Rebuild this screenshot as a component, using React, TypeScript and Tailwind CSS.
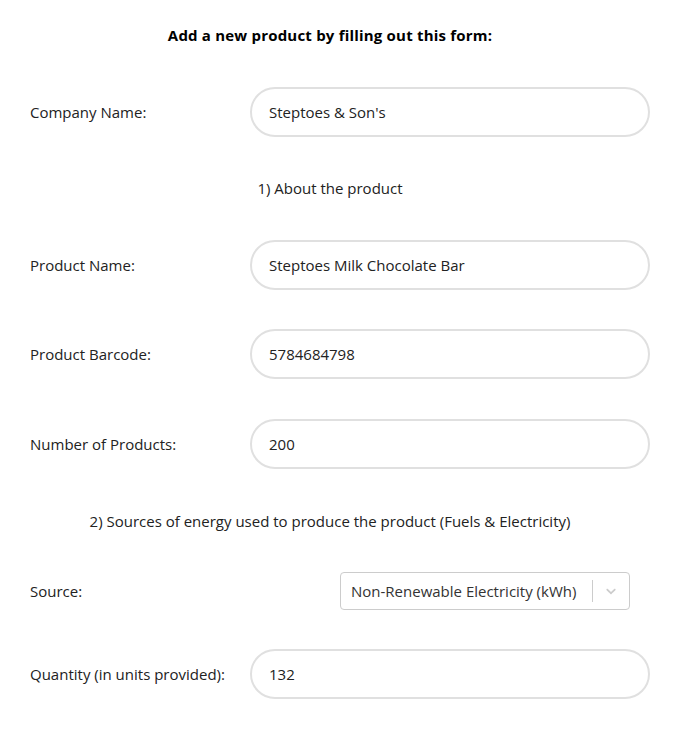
import React, { useState } from "react";

const font = { fontFamily: '"Segoe UI", "Open Sans", "Liberation Sans", sans-serif' };

const Row = ({ label, value, onChange }: { label: string; value: string; onChange: (v: string) => void }) => (
  <div className="flex items-center">
    <label className="w-[250px] shrink-0 pl-[30px] text-[15px] text-[#222] whitespace-nowrap">{label}</label>
    <input
      value={value}
      onChange={(e) => onChange(e.target.value)}
      className="w-[400px] h-[50px] rounded-full border-2 border-[#e0e0e0] px-[17px] text-[15px] text-[#222] outline-none"
    />
  </div>
);

export default function App() {
  const [company, setCompany] = useState("Steptoes & Son's");
  const [product, setProduct] = useState("Steptoes Milk Chocolate Bar");
  const [barcode, setBarcode] = useState("5784684798");
  const [count, setCount] = useState("200");
  const [qty, setQty] = useState("132");

  return (
    <div className="w-[684px] h-[730px] bg-white" style={font}>
      <div className="w-[660px] flex flex-col">
        <h2 className="mt-[25px] h-[20px] leading-[20px] text-center text-[15px] font-bold text-black tracking-[0.2px]">
          Add a new product by filling out this form:
        </h2>
        <div className="mt-[42px]">
          <Row label="Company Name:" value={company} onChange={setCompany} />
        </div>
        <p className="mt-[41px] h-[20px] leading-[20px] text-center text-[15px] text-[#222]">1) About the product</p>
        <div className="mt-[42px]">
          <Row label="Product Name:" value={product} onChange={setProduct} />
        </div>
        <div className="mt-[39px]">
          <Row label="Product Barcode:" value={barcode} onChange={setBarcode} />
        </div>
        <div className="mt-[40px]">
          <Row label="Number of Products:" value={count} onChange={setCount} />
        </div>
        <p className="mt-[42px] h-[20px] leading-[20px] text-center text-[15px] text-[#222]">
          2) Sources of energy used to produce the product (Fuels &amp; Electricity)
        </p>
        <div className="mt-[41px] flex items-center">
          <label className="w-[250px] shrink-0 pl-[30px] text-[15px] text-[#222]">Source:</label>
          <div className="ml-[90px] w-[290px] h-[38px] flex items-center rounded border border-[#ccc] bg-white">
            <span className="flex-1 pl-[10px] text-[15px] text-[#333] whitespace-nowrap">Non-Renewable Electricity (kWh)</span>
            <span className="w-px h-[22px] bg-[#ccc]" />
            <span className="w-[36px] flex justify-center text-[#ccc]">
              <svg width="16" height="16" viewBox="0 0 20 20" fill="currentColor">
                <path d="M4.516 7.548c0.436-0.446 1.043-0.481 1.576 0l3.908 3.747 3.908-3.747c0.533-0.481 1.141-0.446 1.574 0 0.436 0.445 0.408 1.197 0 1.615-0.406 0.418-4.695 4.502-4.695 4.502-0.217 0.223-0.502 0.335-0.787 0.335s-0.57-0.112-0.789-0.335c0 0-4.287-4.084-4.695-4.502s-0.436-1.17 0-1.615z" />
              </svg>
            </span>
          </div>
        </div>
        <div className="mt-[39px]">
          <Row label="Quantity (in units provided):" value={qty} onChange={setQty} />
        </div>
      </div>
    </div>
  );
}
